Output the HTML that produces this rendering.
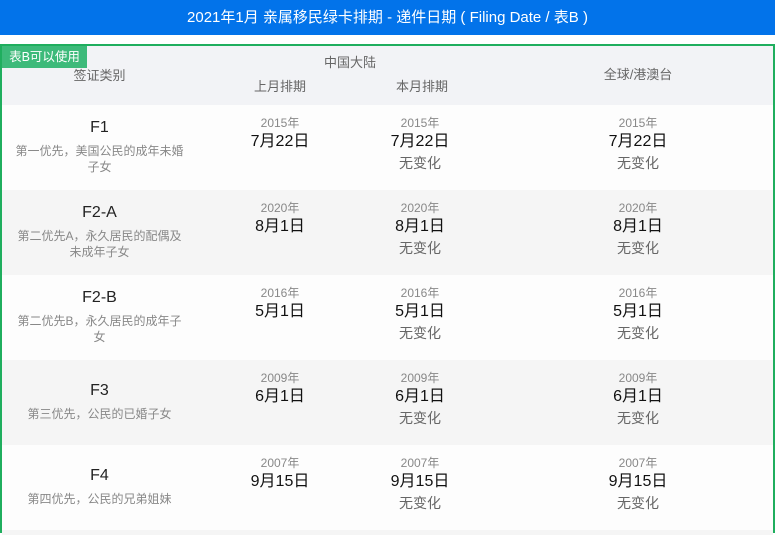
<!DOCTYPE html>
<html><head><meta charset="utf-8"><style>
*{margin:0;padding:0;box-sizing:border-box}
body{width:775px;height:533px;background:#fff;font-family:"Liberation Sans","Noto Sans CJK SC",sans-serif;position:relative;overflow:hidden}
.top{position:absolute;left:0;top:0;width:775px;height:35px;background:#0273ea;color:#fff;font-size:15px;text-align:center;line-height:35px}
.box{position:absolute;left:0;top:44px;width:775px;height:489px;border:2px solid #1fae5e;border-bottom:none}
.hd{position:absolute;left:0;top:0;width:771px;height:59px;background:#f2f3f6}
.t{position:absolute;text-align:center;white-space:nowrap;line-height:1.2}
.g{color:#666;font-size:13px}
.badge{position:absolute;width:85px;height:22px;background:#3dba7a;color:#fff;font-size:12.5px;line-height:22px;text-align:center}
.row{position:absolute;left:0;width:771px;height:85px}
.k{font-size:16px;color:#222}
.d{font-size:12px;color:#888;line-height:16px}
.y{font-size:12px;color:#888}
.dt{font-size:16px;color:#111}
.n{font-size:14px;color:#666}
</style></head><body>
<div class="top">2021年1月 亲属移民绿卡排期 - 递件日期 ( Filing Date / 表B )</div>
<div class="box">
<div class="hd">
<div class="t g" style="left:0;width:195px;top:22px">签证类别</div>
<div class="t g" style="left:278px;width:140px;top:9px">中国大陆</div>
<div class="t g" style="left:208px;width:140px;top:33px">上月排期</div>
<div class="t g" style="left:350px;width:140px;top:33px">本月排期</div>
<div class="t g" style="left:566px;width:140px;top:21px">全球/港澳台</div>
</div>
</div>
<div class="box" style="border:none;background:transparent;left:2px;top:46px;width:771px;height:487px">
<div class="row" style="top:59px;background:#fdfdfd">
<div class="t k" style="left:0;width:195px;top:13px">F1</div>
<div class="t d" style="left:0;width:195px;top:38px">第一优先，美国公民的成年未婚<br>子女</div>
<div class="t y" style="left:208px;width:140px;top:11px">2015年</div><div class="t dt" style="left:208px;width:140px;top:27px">7月22日</div>
<div class="t y" style="left:348px;width:140px;top:11px">2015年</div><div class="t dt" style="left:348px;width:140px;top:27px">7月22日</div><div class="t n" style="left:348px;width:140px;top:50px">无变化</div>
<div class="t y" style="left:566px;width:140px;top:11px">2015年</div><div class="t dt" style="left:566px;width:140px;top:27px">7月22日</div><div class="t n" style="left:566px;width:140px;top:50px">无变化</div>
</div>
<div class="row" style="top:144px;background:#f5f5f5">
<div class="t k" style="left:0;width:195px;top:13px">F2-A</div>
<div class="t d" style="left:0;width:195px;top:38px">第二优先A，永久居民的配偶及<br>未成年子女</div>
<div class="t y" style="left:208px;width:140px;top:11px">2020年</div><div class="t dt" style="left:208px;width:140px;top:27px">8月1日</div>
<div class="t y" style="left:348px;width:140px;top:11px">2020年</div><div class="t dt" style="left:348px;width:140px;top:27px">8月1日</div><div class="t n" style="left:348px;width:140px;top:50px">无变化</div>
<div class="t y" style="left:566px;width:140px;top:11px">2020年</div><div class="t dt" style="left:566px;width:140px;top:27px">8月1日</div><div class="t n" style="left:566px;width:140px;top:50px">无变化</div>
</div>
<div class="row" style="top:229px;background:#fdfdfd">
<div class="t k" style="left:0;width:195px;top:13px">F2-B</div>
<div class="t d" style="left:0;width:195px;top:38px">第二优先B，永久居民的成年子<br>女</div>
<div class="t y" style="left:208px;width:140px;top:11px">2016年</div><div class="t dt" style="left:208px;width:140px;top:27px">5月1日</div>
<div class="t y" style="left:348px;width:140px;top:11px">2016年</div><div class="t dt" style="left:348px;width:140px;top:27px">5月1日</div><div class="t n" style="left:348px;width:140px;top:50px">无变化</div>
<div class="t y" style="left:566px;width:140px;top:11px">2016年</div><div class="t dt" style="left:566px;width:140px;top:27px">5月1日</div><div class="t n" style="left:566px;width:140px;top:50px">无变化</div>
</div>
<div class="row" style="top:314px;background:#f5f5f5">
<div class="t k" style="left:0;width:195px;top:21px">F3</div>
<div class="t d" style="left:0;width:195px;top:46px">第三优先，公民的已婚子女</div>
<div class="t y" style="left:208px;width:140px;top:11px">2009年</div><div class="t dt" style="left:208px;width:140px;top:27px">6月1日</div>
<div class="t y" style="left:348px;width:140px;top:11px">2009年</div><div class="t dt" style="left:348px;width:140px;top:27px">6月1日</div><div class="t n" style="left:348px;width:140px;top:50px">无变化</div>
<div class="t y" style="left:566px;width:140px;top:11px">2009年</div><div class="t dt" style="left:566px;width:140px;top:27px">6月1日</div><div class="t n" style="left:566px;width:140px;top:50px">无变化</div>
</div>
<div class="row" style="top:399px;background:#fdfdfd">
<div class="t k" style="left:0;width:195px;top:21px">F4</div>
<div class="t d" style="left:0;width:195px;top:46px">第四优先，公民的兄弟姐妹</div>
<div class="t y" style="left:208px;width:140px;top:11px">2007年</div><div class="t dt" style="left:208px;width:140px;top:27px">9月15日</div>
<div class="t y" style="left:348px;width:140px;top:11px">2007年</div><div class="t dt" style="left:348px;width:140px;top:27px">9月15日</div><div class="t n" style="left:348px;width:140px;top:50px">无变化</div>
<div class="t y" style="left:566px;width:140px;top:11px">2007年</div><div class="t dt" style="left:566px;width:140px;top:27px">9月15日</div><div class="t n" style="left:566px;width:140px;top:50px">无变化</div>
</div>
<div class="row" style="top:484px;height:5px;background:#f5f5f5"></div>
</div>
<div class="badge" style="left:2px;top:46px">表B可以使用</div>
</body></html>
